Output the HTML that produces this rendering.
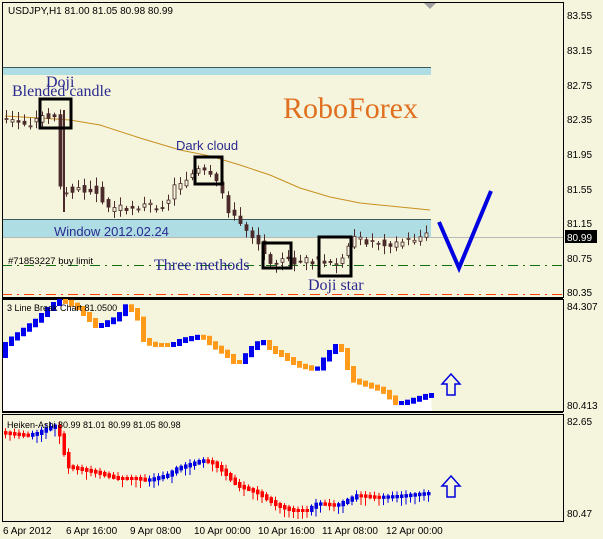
<!DOCTYPE html>
<html><head><meta charset="utf-8"><style>
html,body{margin:0;padding:0;background:#F5F4DC;}
svg{display:block;font-family:"Liberation Sans",sans-serif;}
</style></head><body>
<svg id="s" width="603" height="539" xmlns="http://www.w3.org/2000/svg">
<rect width="603" height="539" fill="#F5F4DC"/>
<rect x="2" y="67" width="429" height="8" fill="#AEDDE3"/>
<line x1="2" y1="67.5" x2="431" y2="67.5" stroke="#3a5a60"/>
<rect x="2" y="219" width="429" height="18" fill="#AEDDE3"/>
<line x1="2" y1="219.5" x2="431" y2="219.5" stroke="#3a5a60"/>
<line x1="2" y1="237.5" x2="563" y2="237.5" stroke="#b8b8b8"/>
<line x1="2" y1="265.5" x2="563" y2="265.5" stroke="#107010" stroke-dasharray="10,5,2,5"/>
<line x1="2" y1="294.5" x2="563" y2="294.5" stroke="#FF4000" stroke-dasharray="10,5,2,5"/>
<polyline fill="none" stroke="#C89020" stroke-width="1" points="5,116 40,118 70,120 100,125 140,138 180,150 210,156 240,165 270,175 300,188 330,197 360,203 400,207 430,210"/>
<g id="candles"></g>
<text x="8" y="14" font-size="10" fill="#000">USDJPY,H1  81.00 81.05 80.98 80.99</text>
<text x="46" y="87" font-size="16" fill="#2a2a90" font-family="Liberation Serif,serif">Doji</text>
<text x="12" y="96" font-size="16" fill="#2a2a90" font-family="Liberation Serif,serif">Blended candle</text>
<text x="176" y="150" font-size="13" fill="#2a2a90">Dark cloud</text>
<text x="54" y="236" font-size="13" fill="#2a2a90">Window 2012.02.24</text>
<text x="8" y="264" font-size="9.5" fill="#000">#71853227 buy limit</text>
<text x="154" y="270" font-size="16" fill="#2a2a90" font-family="Liberation Serif,serif">Three methods</text>
<text x="308" y="290" font-size="16" fill="#2a2a90" font-family="Liberation Serif,serif">Doji star</text>
<text x="283" y="118" font-size="30" fill="#E07020" font-family="Liberation Serif,serif">RoboForex</text>
<g fill="none" stroke="#000" stroke-width="3">
<rect x="40" y="99" width="31" height="29"/>
<rect x="195" y="157" width="27" height="27"/>
<rect x="263" y="243" width="28" height="25"/>
<rect x="319" y="237" width="32" height="39"/>
</g>
<polyline fill="none" stroke="#0000E0" stroke-width="4" points="439,222 459,268 491,191"/>
<rect x="2.5" y="2.5" width="561" height="295" fill="none" stroke="#000"/>
<line x1="2" y1="298.5" x2="563" y2="298.5" stroke="#000"/>
<rect x="2.5" y="299.5" width="561" height="112" fill="none" stroke="#000"/>
<line x1="2" y1="412.5" x2="563" y2="412.5" stroke="#000"/>
<rect x="2.5" y="414.5" width="561" height="107" fill="none" stroke="#000"/>
<polygon points="424,3 436,3 430,9" fill="#a0a0a0"/>
<g id="lb"></g>
<g id="ha"></g>
<text x="7" y="311" font-size="9" fill="#000">3 Line Break Chart 81.0500</text>
<text x="7" y="428" font-size="9" fill="#000">Heiken-Ashi 80.99 81.01 80.99 81.05 80.98</text>
<g fill="#F5F4DC" stroke="#0000E0" stroke-width="1.5">
<polygon points="442,384 451,374 460,384 455,384 455,395 447,395 447,384"/>
<polygon points="442,486 451,476 460,486 455,486 455,497 447,497 447,486"/>
</g>
<g font-size="10" fill="#000">
<text x="567" y="19">83.55</text><text x="567" y="54">83.15</text><text x="567" y="89">82.75</text>
<text x="567" y="123">82.35</text><text x="567" y="158">81.95</text><text x="567" y="193">81.55</text>
<text x="567" y="227">81.15</text><text x="567" y="262">80.75</text><text x="567" y="296">80.35</text>
<text x="567" y="310">84.307</text><text x="567" y="409">80.413</text>
<text x="567" y="425">82.65</text><text x="567" y="517">80.47</text>
</g>
<rect x="565" y="230" width="32" height="13" fill="#000"/>
<text x="567" y="241" font-size="10" fill="#fff">80.99</text>
<g font-size="10" fill="#000">
<text x="3" y="534">6 Apr 2012</text><text x="66" y="534">6 Apr 16:00</text><text x="130" y="534">9 Apr 08:00</text>
<text x="194" y="534">10 Apr 00:00</text><text x="258" y="534">10 Apr 16:00</text><text x="322" y="534">11 Apr 08:00</text>
<text x="386" y="534">12 Apr 00:00</text>
</g>
</svg>
<script>
var NS="http://www.w3.org/2000/svg";
function interp(k,x){for(var i=0;i<k.length-1;i++){if(x>=k[i][0]&&x<=k[i+1][0]){var t=(x-k[i][0])/(k[i+1][0]-k[i][0]);return k[i][1]+t*(k[i+1][1]-k[i][1]);}}return k[k.length-1][1];}
function el(p,t,a){var e=document.createElementNS(NS,t);for(var k in a)e.setAttribute(k,a[k]);p.appendChild(e);return e;}
var seed=3;function rnd(){seed=(seed*9301+49297)%233280;return seed/233280;}
var mk=[[5,120],[35,124],[45,117],[62,116],[64,190],[100,188],[110,208],[170,205],[180,185],[205,170],[215,178],[225,188],[235,215],[260,238],[275,260],[300,262],[320,260],[340,268],[355,240],[380,242],[400,244],[430,236]];
var g=document.getElementById("candles");
for(var x=5;x<=430;x+=6){var a=interp(mk,x),b=interp(mk,x+6);var o=a+(rnd()-.5)*8,c=b+(rnd()-.5)*8;var hi=Math.min(o,c)-2-rnd()*7,lo=Math.max(o,c)+2+rnd()*7;
el(g,"line",{x1:x+1.5,x2:x+1.5,y1:hi,y2:lo,stroke:"#4a2a2a"});
el(g,"rect",{x:x,y:Math.min(o,c),width:3,height:Math.max(1,Math.abs(c-o)),fill:c<o?"#F5F4DC":"#4a2a2a",stroke:"#4a2a2a","stroke-width":.8});}
el(g,"line",{x1:64,x2:64,y1:110,y2:212,stroke:"#4a2a2a","stroke-width":2});
var lk=[[3,356],[10,342],[20,335],[40,320],[55,305],[65,300],[80,307],[100,327],[105,325],[120,318],[130,305],[140,315],[147,340],[155,345],[175,345],[185,340],[195,338],[205,336],[215,345],[230,355],[240,365],[245,360],[255,348],[265,340],[275,350],[285,355],[300,365],[320,370],[330,355],[340,345],[345,350],[355,380],[370,385],[385,390],[400,404],[410,402],[432,395]];
var lb=document.getElementById("lb");var pts="3,411 ";
for(var x=3;x<=432;x+=2)pts+=x+","+interp(lk,x)+" ";pts+="432,411";
el(lb,"polygon",{points:pts,fill:"#fff"});
for(var x=3;x<430;x+=6){var a=interp(lk,x),b=interp(lk,x+6);var up=b<a;el(lb,"rect",{x:x,y:Math.min(a,b)-2,width:5,height:Math.abs(b-a)+4,fill:up?"#0000F0":"#FF9A1A"});}
var hk=[[3,432],[30,435],[40,433],[50,428],[60,425],[64,440],[70,466],[90,470],[100,472],[110,475],[120,478],[140,478],[150,480],[170,475],[180,468],[190,465],[205,460],[215,462],[225,470],[240,485],[260,492],[280,505],[295,510],[310,510],[320,503],[340,505],[360,495],[380,497],[400,496],[430,493]];
var ha=document.getElementById("ha");
for(var x=4;x<430;x+=4.5){var a=interp(hk,x),b=interp(hk,x+4.5);var up=b<a;var col=up?"#0000E0":"#FF0000";
el(ha,"line",{x1:x+1.5,x2:x+1.5,y1:Math.min(a,b)-2-rnd()*3,y2:Math.max(a,b)+2+rnd()*8,stroke:col});
el(ha,"rect",{x:x,y:Math.min(a,b)-1,width:3.5,height:Math.abs(b-a)+3,fill:col});}
</script>
</body></html>
